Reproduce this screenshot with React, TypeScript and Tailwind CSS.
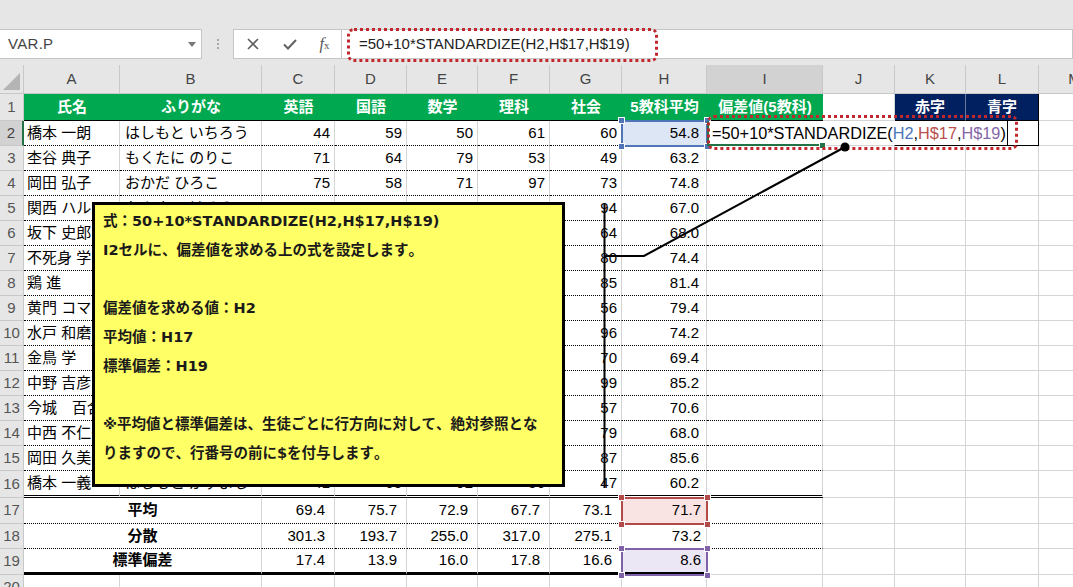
const GRID =
  "grid grid-cols-[24px_96px_142px_73px_72px_71px_72px_72px_85px_116px_72px_71px_73px_72px] w-[1111px]";

type Student = [string, string, number, number, number, number, number, string];

const students: Student[] = [
  ["橋本 一朗", "はしもと いちろう", 44, 59, 50, 61, 60, "54.8"],
  ["杢谷 典子", "もくたに のりこ", 71, 64, 79, 53, 49, "63.2"],
  ["岡田 弘子", "おかだ ひろこ", 75, 58, 71, 97, 73, "74.8"],
  ["関西 ハルミ", "かんさい はるみ", 52, 48, 66, 75, 94, "67.0"],
  ["坂下 史郎", "さかした しろう", 81, 62, 58, 75, 64, "68.0"],
  ["不死身 学", "ふじみ まなぶ", 68, 77, 72, 75, 80, "74.4"],
  ["鶏 進", "にわとり すすむ", 92, 70, 81, 79, 85, "81.4"],
  ["黄門 コマコ", "こうもん こまこ", 88, 91, 79, 83, 56, "79.4"],
  ["水戸 和磨", "みと かずま", 60, 82, 59, 74, 96, "74.2"],
  ["金鳥 学", "きんちょう まなぶ", 55, 93, 76, 53, 70, "69.4"],
  ["中野 吉彦", "なかの よしひこ", 90, 81, 77, 79, 99, "85.2"],
  ["今城　百合", "いまき ゆり", 63, 84, 72, 77, 57, "70.6"],
  ["中西 不仁子", "なかにし ふにこ", 49, 79, 55, 78, 79, "68.0"],
  ["岡田 久美子", "おかだ くみこ", 93, 82, 88, 78, 87, "85.6"],
  ["橋本 一義", "はしもと かずよし", 41, 65, 92, 56, 47, "60.2"],
];

const stats: [string, string[], string, string][] = [
  ["平均", ["69.4", "75.7", "72.9", "67.7", "73.1"], "71.7", "bg-[#f9e3e3]"],
  ["分散", ["301.3", "193.7", "255.0", "317.0", "275.1"], "73.2", ""],
  ["標準偏差", ["17.4", "13.9", "16.0", "17.8", "16.6"], "8.6", "bg-[#ece7f4]"],
];

const letters = ["A", "B", "C", "D", "E", "F", "G", "H", "I", "J", "K", "L", "M"];
const heads = ["氏名", "ふりがな", "英語", "国語", "数学", "理科", "社会", "5教科平均", "偏差値(5教科)"];

const gray = "border-r border-b border-[#d4d4d4]";
const rowHead =
  "flex items-center justify-center bg-[#e6e6e6] border-r border-b border-[#c8c8c8] text-[15px] text-[#555]";

function Blank({ n }: { n: number }) {
  return (
    <>
      {Array.from({ length: n }).map((_, i) => (
        <div key={i} className={gray} />
      ))}
    </>
  );
}

function TopBar() {
  return (
    <div className="h-[65px] bg-[#e6e6e6] pt-[29px] flex items-start">
      <div className="relative w-[202px] h-[30px] bg-white border border-l-0 border-[#c6c6c6] flex items-center pl-[8px] text-[15px] text-[#444] tracking-[0.3px]">
        VAR.P
        <svg className="absolute right-[5px] top-[12px]" width="8" height="5" viewBox="0 0 8 5">
          <path d="M0 0h8L4 5z" fill="#777" />
        </svg>
      </div>
      <div className="w-[31px] h-[30px] flex flex-col items-center justify-center gap-[2px]">
        <div className="w-[2px] h-[2px] bg-[#a8a8a8]" />
        <div className="w-[2px] h-[2px] bg-[#a8a8a8]" />
        <div className="w-[2px] h-[2px] bg-[#a8a8a8]" />
      </div>
      <div className="w-[109px] h-[30px] bg-white border border-[#c6c6c6] flex items-center">
        <span className="w-[38px] flex justify-center">
          <svg width="12" height="12" viewBox="0 0 12 12">
            <path d="M1 1l10 10M11 1L1 11" stroke="#616161" strokeWidth="1.6" />
          </svg>
        </span>
        <span className="w-[36px] flex justify-center">
          <svg width="14" height="11" viewBox="0 0 14 11">
            <path d="M1 5.5l4 4L13 1" stroke="#616161" strokeWidth="2" fill="none" />
          </svg>
        </span>
        <span className="w-[33px] flex justify-center items-baseline font-['Liberation_Serif',serif] italic text-[#555] text-[16px] leading-none">
          f<span className="text-[11px] not-italic">x</span>
        </span>
      </div>
      <div className="flex-1 h-[30px] bg-white border border-l-0 border-[#c6c6c6] flex items-center pl-[17px] text-[15px] text-[#222]">
        =50+10*STANDARDIZE(H2,H$17,H$19)
      </div>
    </div>
  );
}

function Sheet() {
  return (
    <div className="text-[15px] text-black">
      <div className={`${GRID} h-[29px] bg-[#e6e6e6]`}>
        <div className="relative border-r border-b border-[#c8c8c8]">
          <div className="absolute right-[3px] bottom-[3px] w-0 h-0 border-l-[17px] border-l-transparent border-b-[17px] border-b-[#b4b4b4]" />
        </div>
        {letters.map((l) => (
          <div
            key={l}
            className={`flex items-center justify-center border-r border-b border-[#c8c8c8] text-[#444] ${
              l === "I" ? "bg-[#d2d2d2]" : ""
            }`}
          >
            {l}
          </div>
        ))}
      </div>

      <div className={`${GRID} h-[27px]`}>
        <div className={rowHead}>1</div>
        {heads.map((h) => (
          <div
            key={h}
            className="flex items-center justify-center bg-[#00a84f] text-white font-bold border-b border-b-black whitespace-nowrap"
          >
            {h}
          </div>
        ))}
        <div className={gray} />
        <div className="flex items-center justify-center bg-[#002060] text-white font-bold border-r border-r-[#6c7aa0] border-b border-b-black">
          赤字
        </div>
        <div className="flex items-center justify-center bg-[#002060] text-white font-bold border-r border-r-black border-b border-b-black">
          青字
        </div>
        <div className={gray} />
      </div>

      {students.map((s, i) => {
        const last = i === students.length - 1;
        const bottom = last
          ? "border-b-[3px] border-b-black [border-bottom-style:double]"
          : "border-b border-b-black [border-bottom-style:dotted]";
        const cell = `border-r border-r-[#d4d4d4] ${bottom} flex items-center overflow-hidden whitespace-nowrap`;
        return (
          <div key={i} className={`${GRID} ${last ? "h-[27px]" : "h-[25px]"}`}>
            <div
              className={
                i === 0
                  ? "flex items-center justify-center bg-[#d2d2d2] border-b border-b-[#c8c8c8] border-r-2 border-r-[#217346] text-[#444]"
                  : rowHead
              }
            >
              {i + 2}
            </div>
            <div className={`${cell} pl-[3px]`}>{s[0]}</div>
            <div className={`${cell} pl-[5px]`}>{s[1]}</div>
            {[s[2], s[3], s[4], s[5], s[6]].map((v, j) => (
              <div key={j} className={`${cell} justify-end pr-[4px]`}>
                {v}
              </div>
            ))}
            <div className={`${cell} justify-end pr-[7px] ${i === 0 ? "bg-[#dde6f5]" : ""}`}>{s[7]}</div>
            <div className={cell} />
            {i === 0 ? (
              <>
                <div className="border-r border-r-black border-b border-b-[#d4d4d4]" />
                <div className="border-r border-r-[#d4d4d4] border-b border-b-black" />
                <div className="border-r border-r-black border-b border-b-black" />
                <div className={gray} />
              </>
            ) : (
              <Blank n={4} />
            )}
          </div>
        );
      })}

      {stats.map(([label, vals, h, bg], i) => {
        const last = i === 2;
        const bottom = last
          ? "border-b-[3px] border-b-black"
          : "border-b border-b-black [border-bottom-style:dotted]";
        const cell = `border-r border-r-[#d4d4d4] ${bottom} flex items-center whitespace-nowrap`;
        return (
          <div key={label} className={`${GRID} ${i === 1 ? "h-[25px]" : "h-[26px]"}`}>
            <div className={rowHead}>{17 + i}</div>
            <div className={`${cell} col-span-2 justify-center font-bold`}>{label}</div>
            {vals.map((v) => (
              <div key={v} className={`${cell} justify-end pr-[9px]`}>
                {v}
              </div>
            ))}
            <div className={`${cell} justify-end pr-[5px] ${bg}`}>{h}</div>
            <div
              className={
                last ? gray : "border-r border-r-[#d4d4d4] border-b border-b-black [border-bottom-style:dotted]"
              }
            />
            <Blank n={4} />
          </div>
        );
      })}

      <div className={`${GRID} h-[25px]`}>
        <div className={rowHead}>20</div>
        <Blank n={13} />
      </div>
    </div>
  );
}

function Callout() {
  const lines = [
    "式：50+10*STANDARDIZE(H2,H$17,H$19)",
    "I2セルに、偏差値を求める上の式を設定します。",
    "",
    "偏差値を求める値：H2",
    "平均値：H17",
    "標準偏差：H19",
    "",
    "※平均値と標準偏差は、生徒ごとに行方向に対して、絶対参照とな",
    "りますので、行番号の前に$を付与します。",
  ];
  return (
    <div className="absolute left-[92px] top-[202px] w-[473px] h-[285px] bg-[#ffff66] border-[3px] border-black pl-[8px] pt-[2px] font-['DejaVu_Sans','Noto_Sans_CJK_JP',sans-serif] text-[14.5px] font-bold leading-[29px] text-[#1a1a1a] [font-kerning:none]">
      {lines.map((l, i) => (
        <div key={i} className="h-[29px] whitespace-nowrap">
          {l}
        </div>
      ))}
    </div>
  );
}

export default function App() {
  return (
    <div className="relative w-[1073px] h-[587px] overflow-hidden bg-white font-['Liberation_Sans','Noto_Sans_CJK_JP',sans-serif]">
      <TopBar />
      <Sheet />

      {/* range highlights */}
      <div className="absolute left-[621px] top-[120px] w-[87px] h-[27px] border-2 border-[#4f75b8]">
        <div className="absolute -left-[5px] -top-[5px] w-[7px] h-[7px] bg-[#4f75b8] border border-white" />
        <div className="absolute -right-[5px] -top-[5px] w-[7px] h-[7px] bg-[#4f75b8] border border-white" />
        <div className="absolute -left-[5px] -bottom-[5px] w-[7px] h-[7px] bg-[#4f75b8] border border-white" />
        <div className="absolute -right-[5px] -bottom-[5px] w-[7px] h-[7px] bg-[#4f75b8] border border-white" />
      </div>
      <div className="absolute left-[621px] top-[497px] w-[87px] h-[28px] border-2 border-[#b24a4a]">
        <div className="absolute -left-[5px] -top-[5px] w-[7px] h-[7px] bg-[#b24a4a] border border-white" />
        <div className="absolute -right-[5px] -top-[5px] w-[7px] h-[7px] bg-[#b24a4a] border border-white" />
        <div className="absolute -left-[5px] -bottom-[5px] w-[7px] h-[7px] bg-[#b24a4a] border border-white" />
        <div className="absolute -right-[5px] -bottom-[5px] w-[7px] h-[7px] bg-[#b24a4a] border border-white" />
      </div>
      <div className="absolute left-[621px] top-[548px] w-[87px] h-[28px] border-2 border-[#7f62a8]">
        <div className="absolute -left-[5px] -top-[5px] w-[7px] h-[7px] bg-[#7f62a8] border border-white" />
        <div className="absolute -right-[5px] -top-[5px] w-[7px] h-[7px] bg-[#7f62a8] border border-white" />
        <div className="absolute -left-[5px] -bottom-[5px] w-[7px] h-[7px] bg-[#7f62a8] border border-white" />
        <div className="absolute -right-[5px] -bottom-[5px] w-[7px] h-[7px] bg-[#7f62a8] border border-white" />
      </div>

      {/* I2 in edit mode */}
      <div className="absolute left-[707px] top-[121px] w-[301px] h-[24px] bg-white border-l-2 border-l-[#217346] border-r border-r-black flex items-center pl-[3px] text-[16.3px] text-black whitespace-nowrap">
        =50+10*STANDARDIZE(<span className="text-[#4a78b8]">H2</span>,<span className="text-[#b9504d]">H$17</span>,
        <span className="text-[#8466a8]">H$19</span>)
      </div>
      <div className="absolute left-[707px] top-[144px] w-[116px] h-[2px] bg-[#217346]" />
      <div className="absolute left-[819px] top-[142px] w-[7px] h-[7px] bg-[#217346] border border-white" />

      <Callout />

      {/* red dotted marks */}
      <div className="absolute left-[347px] top-[28px] w-[311px] h-[34px] border-[3px] border-dotted border-[#c0282d] rounded-[7px]" />
      <div className="absolute left-[707px] top-[115px] w-[311px] h-[35px] border-[3px] border-dotted border-[#c0282d] rounded-[7px]" />

      <svg className="absolute inset-0 pointer-events-none" width="1073" height="587">
        <path d="M604.5 204V488M604.5 256H644L845 147" stroke="#000" strokeWidth="2" fill="none" />
        <circle cx="845" cy="147" r="4.5" fill="#000" />
      </svg>
    </div>
  );
}
